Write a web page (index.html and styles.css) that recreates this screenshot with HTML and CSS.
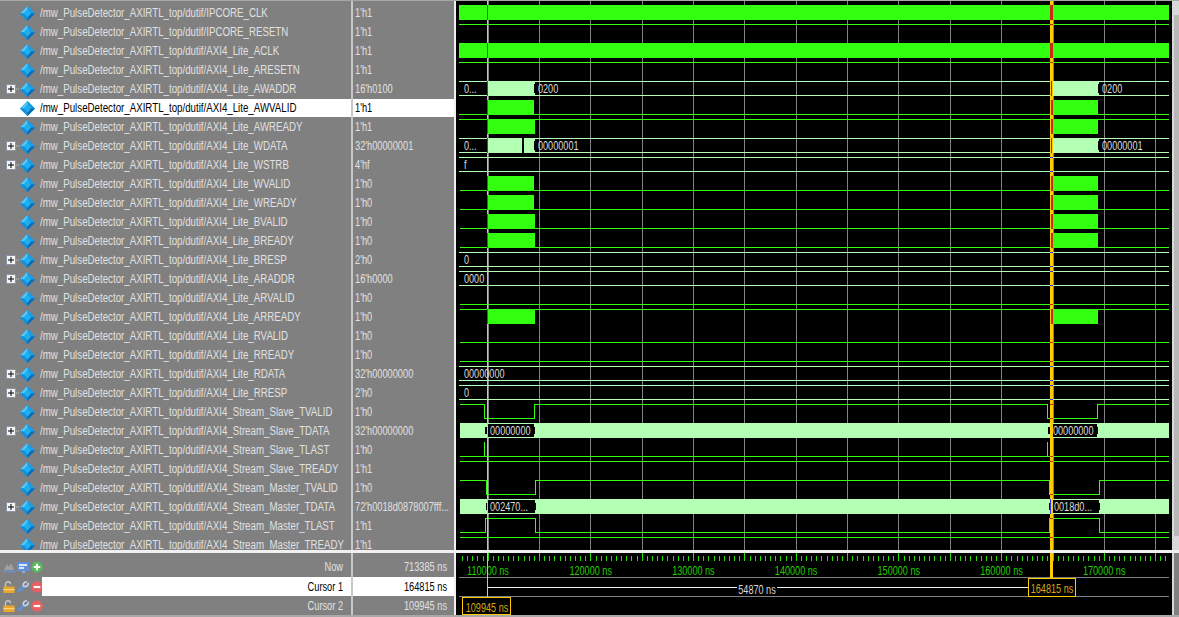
FILE: index.html
```html
<!DOCTYPE html>
<html lang="en">
<head>
<meta charset="utf-8">
<title>Wave</title>
<link rel="stylesheet" href="styles.css">
</head>
<body>
<svg class="defs" aria-hidden="true">
  <symbol id="dia" viewBox="0 0 15 15">
    <polygon points="7.5,0 15,7.5 7.5,15 0,7.5" fill="#1288d8"/>
    <polygon points="7.5,0 15,7.5 11,7.5 7.5,3.5" fill="#1a9ee8"/>
    <polygon points="7.5,0 0,7.5 4,7.5 7.5,3.5" fill="#55c8f8"/>
    <polygon points="0,7.5 7.5,15 7.5,11.5 4,7.5" fill="#1590dc"/>
    <polygon points="15,7.5 7.5,15 7.5,11.5 11,7.5" fill="#0a6cb4"/>
    <polygon points="7.5,3.5 11,7.5 7.5,11.5 4,7.5" fill="#1eb0f0"/>
  </symbol>
  <symbol id="exp" viewBox="0 0 14 10">
    <rect x="0.5" y="0.5" width="9" height="9" fill="#f4f4f4" stroke="#8a94a8"/>
    <path d="M2 5h6M5 2v6" stroke="#000" fill="none"/>
    <path d="M10 5h4" stroke="#d0d0d0" stroke-dasharray="1 1" fill="none"/>
  </symbol>
  <symbol id="lock" viewBox="0 0 12 12">
    <path d="M2.500 6V3.200a2.500 2.500 0 0 1 5 0" fill="none" stroke="#c4c4c4" stroke-width="1.400"/>
    <rect x="0.500" y="5.500" width="11" height="6.500" fill="#e8a830"/>
    <rect x="0.500" y="8" width="11" height="1.200" fill="#f8d878"/>
  </symbol>
  <symbol id="wrench" viewBox="0 0 12 12">
    <path d="M1.500 10.500L7.500 4.500" stroke="#5f90dc" stroke-width="3" fill="none"/>
    <path d="M9.800 0.900a3 3 0 0 0-3.200 4.200M6.600 5.100a3 3 0 0 0 4.500-3.300" stroke="#c4d2ec" stroke-width="1.700" fill="none"/>
  </symbol>
  <symbol id="minus" viewBox="0 0 11 11">
    <circle cx="5.500" cy="5.500" r="5.300" fill="#e86060"/>
    <rect x="2.500" y="4.500" width="6" height="2" fill="#fff"/>
  </symbol>
  <symbol id="plus" viewBox="0 0 11 11">
    <circle cx="5.500" cy="5.500" r="5.300" fill="#58b858"/>
    <path d="M2.500 5.500h6M5.500 2.500v6" stroke="#fff" stroke-width="2" fill="none"/>
  </symbol>
  <symbol id="scene" viewBox="0 0 12 12">
    <path d="M1 9l3-6 2 3 2-4 3 7z" fill="#a0a0a0"/>
    <path d="M0 10.500h12" stroke="#6a90d8" stroke-width="1.500" fill="none"/>
  </symbol>
  <symbol id="screen" viewBox="0 0 12 12">
    <rect x="0" y="1" width="12" height="9" fill="#5f90dc"/>
    <rect x="2" y="3" width="8" height="2" fill="#dfe8fa"/>
    <rect x="2" y="6" width="5" height="2" fill="#dfe8fa"/>
    <rect x="5" y="10" width="3" height="2" fill="#8fa8d8"/>
  </symbol>
</svg>
<main class="app">
  <section class="upper">
    <div class="names">
      <div class="row"><span class="tree"></span><svg class="sig"><use href="#dia"/></svg><span class="nm">/mw_PulseDetector_AXIRTL_top/dutif/IPCORE_CLK</span></div>
      <div class="row"><span class="tree"></span><svg class="sig"><use href="#dia"/></svg><span class="nm">/mw_PulseDetector_AXIRTL_top/dutif/IPCORE_RESETN</span></div>
      <div class="row"><span class="tree"></span><svg class="sig"><use href="#dia"/></svg><span class="nm">/mw_PulseDetector_AXIRTL_top/dutif/AXI4_Lite_ACLK</span></div>
      <div class="row"><span class="tree"></span><svg class="sig"><use href="#dia"/></svg><span class="nm">/mw_PulseDetector_AXIRTL_top/dutif/AXI4_Lite_ARESETN</span></div>
      <div class="row"><span class="tree"><svg class="exp"><use href="#exp"/></svg></span><svg class="sig"><use href="#dia"/></svg><span class="nm">/mw_PulseDetector_AXIRTL_top/dutif/AXI4_Lite_AWADDR</span></div>
      <div class="row sel"><span class="tree"></span><svg class="sig"><use href="#dia"/></svg><span class="nm">/mw_PulseDetector_AXIRTL_top/dutif/AXI4_Lite_AWVALID</span></div>
      <div class="row"><span class="tree"></span><svg class="sig"><use href="#dia"/></svg><span class="nm">/mw_PulseDetector_AXIRTL_top/dutif/AXI4_Lite_AWREADY</span></div>
      <div class="row"><span class="tree"><svg class="exp"><use href="#exp"/></svg></span><svg class="sig"><use href="#dia"/></svg><span class="nm">/mw_PulseDetector_AXIRTL_top/dutif/AXI4_Lite_WDATA</span></div>
      <div class="row"><span class="tree"><svg class="exp"><use href="#exp"/></svg></span><svg class="sig"><use href="#dia"/></svg><span class="nm">/mw_PulseDetector_AXIRTL_top/dutif/AXI4_Lite_WSTRB</span></div>
      <div class="row"><span class="tree"></span><svg class="sig"><use href="#dia"/></svg><span class="nm">/mw_PulseDetector_AXIRTL_top/dutif/AXI4_Lite_WVALID</span></div>
      <div class="row"><span class="tree"></span><svg class="sig"><use href="#dia"/></svg><span class="nm">/mw_PulseDetector_AXIRTL_top/dutif/AXI4_Lite_WREADY</span></div>
      <div class="row"><span class="tree"></span><svg class="sig"><use href="#dia"/></svg><span class="nm">/mw_PulseDetector_AXIRTL_top/dutif/AXI4_Lite_BVALID</span></div>
      <div class="row"><span class="tree"></span><svg class="sig"><use href="#dia"/></svg><span class="nm">/mw_PulseDetector_AXIRTL_top/dutif/AXI4_Lite_BREADY</span></div>
      <div class="row"><span class="tree"><svg class="exp"><use href="#exp"/></svg></span><svg class="sig"><use href="#dia"/></svg><span class="nm">/mw_PulseDetector_AXIRTL_top/dutif/AXI4_Lite_BRESP</span></div>
      <div class="row"><span class="tree"><svg class="exp"><use href="#exp"/></svg></span><svg class="sig"><use href="#dia"/></svg><span class="nm">/mw_PulseDetector_AXIRTL_top/dutif/AXI4_Lite_ARADDR</span></div>
      <div class="row"><span class="tree"></span><svg class="sig"><use href="#dia"/></svg><span class="nm">/mw_PulseDetector_AXIRTL_top/dutif/AXI4_Lite_ARVALID</span></div>
      <div class="row"><span class="tree"></span><svg class="sig"><use href="#dia"/></svg><span class="nm">/mw_PulseDetector_AXIRTL_top/dutif/AXI4_Lite_ARREADY</span></div>
      <div class="row"><span class="tree"></span><svg class="sig"><use href="#dia"/></svg><span class="nm">/mw_PulseDetector_AXIRTL_top/dutif/AXI4_Lite_RVALID</span></div>
      <div class="row"><span class="tree"></span><svg class="sig"><use href="#dia"/></svg><span class="nm">/mw_PulseDetector_AXIRTL_top/dutif/AXI4_Lite_RREADY</span></div>
      <div class="row"><span class="tree"><svg class="exp"><use href="#exp"/></svg></span><svg class="sig"><use href="#dia"/></svg><span class="nm">/mw_PulseDetector_AXIRTL_top/dutif/AXI4_Lite_RDATA</span></div>
      <div class="row"><span class="tree"><svg class="exp"><use href="#exp"/></svg></span><svg class="sig"><use href="#dia"/></svg><span class="nm">/mw_PulseDetector_AXIRTL_top/dutif/AXI4_Lite_RRESP</span></div>
      <div class="row"><span class="tree"></span><svg class="sig"><use href="#dia"/></svg><span class="nm">/mw_PulseDetector_AXIRTL_top/dutif/AXI4_Stream_Slave_TVALID</span></div>
      <div class="row"><span class="tree"><svg class="exp"><use href="#exp"/></svg></span><svg class="sig"><use href="#dia"/></svg><span class="nm">/mw_PulseDetector_AXIRTL_top/dutif/AXI4_Stream_Slave_TDATA</span></div>
      <div class="row"><span class="tree"></span><svg class="sig"><use href="#dia"/></svg><span class="nm">/mw_PulseDetector_AXIRTL_top/dutif/AXI4_Stream_Slave_TLAST</span></div>
      <div class="row"><span class="tree"></span><svg class="sig"><use href="#dia"/></svg><span class="nm">/mw_PulseDetector_AXIRTL_top/dutif/AXI4_Stream_Slave_TREADY</span></div>
      <div class="row"><span class="tree"></span><svg class="sig"><use href="#dia"/></svg><span class="nm">/mw_PulseDetector_AXIRTL_top/dutif/AXI4_Stream_Master_TVALID</span></div>
      <div class="row"><span class="tree"><svg class="exp"><use href="#exp"/></svg></span><svg class="sig"><use href="#dia"/></svg><span class="nm">/mw_PulseDetector_AXIRTL_top/dutif/AXI4_Stream_Master_TDATA</span></div>
      <div class="row"><span class="tree"></span><svg class="sig"><use href="#dia"/></svg><span class="nm">/mw_PulseDetector_AXIRTL_top/dutif/AXI4_Stream_Master_TLAST</span></div>
      <div class="row"><span class="tree"></span><svg class="sig"><use href="#dia"/></svg><span class="nm">/mw_PulseDetector_AXIRTL_top/dutif/AXI4_Stream_Master_TREADY</span></div>
    </div>
    <div class="values">
      <div class="row"><span class="v">1'h1</span></div><div class="row"><span class="v">1'h1</span></div><div class="row"><span class="v">1'h1</span></div><div class="row"><span class="v">1'h1</span></div>
      <div class="row"><span class="v">16'h0100</span></div><div class="row sel"><span class="v">1'h1</span></div><div class="row"><span class="v">1'h1</span></div><div class="row"><span class="v">32'h00000001</span></div>
      <div class="row"><span class="v">4'hf</span></div><div class="row"><span class="v">1'h0</span></div><div class="row"><span class="v">1'h0</span></div><div class="row"><span class="v">1'h0</span></div>
      <div class="row"><span class="v">1'h0</span></div><div class="row"><span class="v">2'h0</span></div><div class="row"><span class="v">16'h0000</span></div><div class="row"><span class="v">1'h0</span></div>
      <div class="row"><span class="v">1'h0</span></div><div class="row"><span class="v">1'h0</span></div><div class="row"><span class="v">1'h0</span></div><div class="row"><span class="v">32'h00000000</span></div>
      <div class="row"><span class="v">2'h0</span></div><div class="row"><span class="v">1'h0</span></div><div class="row"><span class="v">32'h00000000</span></div><div class="row"><span class="v">1'h0</span></div>
      <div class="row"><span class="v">1'h1</span></div><div class="row"><span class="v">1'h0</span></div><div class="row"><span class="v">72'h0018d0878007fff...</span></div><div class="row"><span class="v">1'h1</span></div>
      <div class="row"><span class="v">1'h1</span></div>
    </div>
    <div class="wave">
      <svg class="canvas" viewBox="456 1 716 549" width="716" height="549">
        <path class="grid" d="M488.500 0V550M539.500 0V550M590.500 0V550M642.500 0V550M693.500 0V550M744.500 0V550M796.500 0V550M847.500 0V550M898.500 0V550M950.500 0V550M1001.500 0V550M1053.500 0V550M1104.500 0V550M1155.500 0V550"/>
        <path class="soft" d="M459 81.500H1169M459 95.500H1169M459 138.500H1169M459 152.500H1169M459 157.500H1169M459 171.500H1169M459 252.500H1169M459 266.500H1169M459 271.500H1169M459 285.500H1169M459 366.500H1169M459 380.500H1169M459 385.500H1169M459 399.500H1169"/>
        <path class="line" d="M459 24.500H1169M459 62.500H1169M459 114.500H1169M459 119.500H1169M460 190.500H1169M460 209.500H1169M460 228.500H1169M460 247.500H1169M460 304.500H1169M460 309.500H1169M460 342.500H1169M460 361.500H1169M460 456.500H1169M460 461.500H1169M460 537.500H1169"/>
        <path class="line" d="M460 404.500H484.500V418.500H534.500V404.500H1047.500V418.500H1097.500V404.500H1169"/>
        <path class="line" d="M460 480.500H486.500V494.500H535.500V480.500H1049.500V494.500H1099.500V480.500H1169"/>
        <path class="line" d="M460 532.500H485.500V518.500H535.500V532.500H1049.500V518.500H1099.500V532.500H1169"/>
        <path class="line" d="M484.500 442V456M1047.500 442V456"/>
        <g class="bars">
          <rect x="459" y="5" width="710" height="15"/>
          <rect x="459" y="43" width="710" height="15"/>
          <rect x="488" y="100" width="46" height="15"/><rect x="1053" y="100" width="45" height="15"/>
          <rect x="488" y="119" width="47" height="15"/><rect x="1053" y="119" width="45" height="15"/>
          <rect x="488" y="176" width="46" height="15"/><rect x="1053" y="176" width="45" height="15"/>
          <rect x="488" y="195" width="46" height="15"/><rect x="1053" y="195" width="45" height="15"/>
          <rect x="488" y="214" width="47" height="15"/><rect x="1053" y="214" width="45" height="15"/>
          <rect x="488" y="233" width="47" height="15"/><rect x="1053" y="233" width="45" height="15"/>
          <rect x="488" y="309" width="47" height="15"/><rect x="1053" y="309" width="45" height="15"/>
        </g>
        <g class="bus">
          <rect x="488" y="81" width="47" height="15"/><rect x="1053" y="81" width="46" height="15"/>
          <rect x="488" y="138" width="34" height="15"/><rect x="524" y="138" width="11" height="15"/><rect x="1053" y="138" width="46" height="15"/>
          <rect x="460" y="423" width="709" height="15"/>
          <rect x="460" y="499" width="709" height="15"/>
        </g>
        <g class="notch">
          <rect x="534" y="84" width="1" height="9"/><rect x="1098" y="84" width="1" height="9"/>
          <rect x="534" y="141" width="1" height="9"/><rect x="1098" y="141" width="1" height="9"/>
          <rect x="522" y="138" width="2" height="15"/>
          <rect x="487" y="424" width="47" height="13"/><rect x="485" y="427" width="2" height="7"/><rect x="534" y="427" width="1" height="7"/>
          <rect x="1050" y="424" width="47" height="13"/><rect x="1048" y="427" width="2" height="7"/><rect x="1097" y="427" width="1" height="7"/>
          <rect x="488" y="500" width="47" height="13"/><rect x="486" y="503" width="2" height="7"/><rect x="535" y="503" width="1" height="7"/>
          <rect x="1051" y="500" width="48" height="13"/><rect x="1049" y="503" width="2" height="7"/><rect x="1099" y="503" width="1" height="7"/>
        </g>
        <g class="sigval">
          <text x="464" y="93">0...</text><text x="538" y="93">0200</text><text x="1102" y="93">0200</text>
          <text x="464" y="150">0...</text><text x="538" y="150">00000001</text><text x="1102" y="150">00000001</text>
          <text x="464" y="169">f</text>
          <text x="464" y="264">0</text>
          <text x="464" y="283">0000</text>
          <text x="464" y="378">00000000</text>
          <text x="464" y="397">0</text>
          <text x="490" y="435">00000000</text><text x="1053" y="435">00000000</text>
          <text x="490" y="511">002470...</text><text x="1054" y="511">0018d0...</text>
        </g>
        <rect class="c2" x="487" y="0" width="1" height="550"/>
        <rect class="c1" x="1050" y="0" width="3" height="550"/>
        <g class="hit">
          <rect x="487" y="5" width="1" height="15"/><rect x="487" y="43" width="1" height="15"/>
          <rect x="487" y="100" width="1" height="15"/><rect x="487" y="119" width="1" height="15"/>
          <rect x="487" y="176" width="1" height="15"/><rect x="487" y="195" width="1" height="15"/>
          <rect x="487" y="214" width="1" height="15"/><rect x="487" y="233" width="1" height="15"/>
          <rect x="487" y="309" width="1" height="15"/>
          <rect x="1050" y="5" width="3" height="15"/><rect x="1050" y="43" width="3" height="15"/>
          <rect x="1051" y="100" width="2" height="15"/><rect x="1051" y="119" width="2" height="15"/>
          <rect x="1051" y="176" width="2" height="15"/><rect x="1051" y="195" width="2" height="15"/>
          <rect x="1051" y="214" width="2" height="15"/><rect x="1051" y="233" width="2" height="15"/>
          <rect x="1051" y="309" width="2" height="15"/>
          <rect x="1050" y="24" width="3" height="1"/><rect x="1050" y="62" width="3" height="1"/>
          <rect x="1050" y="304" width="3" height="1"/><rect x="1050" y="342" width="3" height="1"/>
          <rect x="1050" y="361" width="3" height="1"/><rect x="1050" y="404" width="3" height="1"/>
          <rect x="1050" y="418" width="3" height="1"/><rect x="1050" y="456" width="3" height="1"/>
          <rect x="1050" y="461" width="3" height="1"/><rect x="1050" y="494" width="3" height="1"/>
          <rect x="1050" y="518" width="3" height="1"/><rect x="1050" y="537" width="3" height="1"/>
        </g>
        <g class="blue">
          <rect x="1051" y="81" width="1" height="15"/><rect x="1051" y="138" width="1" height="15"/>
          <rect x="1050" y="499" width="1" height="15"/><rect x="487" y="81" width="1" height="15"/>
          <rect x="487" y="138" width="1" height="15"/>
          <rect x="1050" y="157" width="3" height="1"/><rect x="1050" y="171" width="3" height="1"/>
          <rect x="1050" y="252" width="3" height="1"/><rect x="1050" y="266" width="3" height="1"/>
          <rect x="1050" y="271" width="3" height="1"/><rect x="1050" y="285" width="3" height="1"/>
          <rect x="1050" y="366" width="3" height="1"/><rect x="1050" y="380" width="3" height="1"/>
          <rect x="1050" y="385" width="3" height="1"/><rect x="1050" y="399" width="3" height="1"/>
        </g>
      </svg>
    </div>
    <div class="scroll"><span class="sb-btn"></span><span class="sb-track"></span><span class="sb-btn"></span></div>
  </section>
  <div class="rule"></div>
  <section class="lower">
    <div class="names">
      <div class="brow first">
        <span class="tools"><svg class="ti"><use href="#scene"/></svg><svg class="ti"><use href="#screen"/></svg><svg class="ti"><use href="#plus"/></svg></span>
        <span class="lbl"><span class="r">Now</span></span>
      </div>
      <div class="brow">
        <span class="tools"><svg class="ti"><use href="#lock"/></svg><svg class="ti"><use href="#wrench"/></svg><svg class="ti"><use href="#minus"/></svg></span>
        <span class="lbl on"><span class="r">Cursor 1</span></span>
      </div>
      <div class="brow">
        <span class="tools"><svg class="ti"><use href="#lock"/></svg><svg class="ti"><use href="#wrench"/></svg><svg class="ti"><use href="#minus"/></svg></span>
        <span class="lbl"><span class="r">Cursor 2</span></span>
      </div>
    </div>
    <div class="values">
      <div class="brow first tm"><span class="r">713385 ns</span></div>
      <div class="brow tm on"><span class="r">164815 ns</span></div>
      <div class="brow tm"><span class="r">109945 ns</span></div>
    </div>
    <div class="wave">
      <svg class="canvas" viewBox="456 553 716 62" width="716" height="62">
        <path class="minor" d="M462 558.500H1169"/>
        <path class="major" d="M488.500 553V561M539.500 553V561M590.500 553V561M642.500 553V561M693.500 553V561M744.500 553V561M796.500 553V561M847.500 553V561M898.500 553V561M950.500 553V561M1001.500 553V561M1053.500 553V561M1104.500 553V561M1155.500 553V561"/>
        <g class="ticks">
          <text x="488" y="575">110000 ns</text><text x="590.700" y="575">120000 ns</text><text x="693.400" y="575">130000 ns</text><text x="796.100" y="575">140000 ns</text><text x="898.800" y="575">150000 ns</text><text x="1001.500" y="575">160000 ns</text><text x="1104.200" y="575">170000 ns</text>
        </g>
        <path class="sep" d="M459 577.500H1169M459 596.500H1169"/>
        <path class="span" d="M488 587.500H737M777 587.500H1029"/>
        <text class="delta" x="757" y="594">54870 ns</text>
        <rect class="c2" x="487" y="553" width="1" height="44"/>
        <rect class="c1" x="1050" y="553" width="3" height="25"/>
        <rect class="box" x="1028.500" y="578.500" width="47" height="18"/>
        <text class="ctext" x="1052" y="593">164815 ns</text>
        <rect class="box" x="462.500" y="597.500" width="48" height="17"/>
        <text class="ctext" x="487" y="612">109945 ns</text>
      </svg>
    </div>
    <div class="scroll lowbar"></div>
  </section>
  <div class="foot"></div>
</main>
</body>
</html>
```
FILE: styles.css
```css
* { box-sizing: border-box; }
html, body { margin: 0; padding: 0; }
body {
  width: 1179px;
  height: 617px;
  overflow: hidden;
  background: #808080;
  font-family: "Liberation Sans", Arial, sans-serif;
  font-size: 12px;
  color: #e0e0e0;
}
.defs { position: absolute; width: 0; height: 0; }
.app { display: flex; flex-direction: column; height: 617px; border-top: 1px solid #a8a8a8; }

.upper { display: flex; height: 549px; overflow: hidden; }
.rule { height: 3px; background: #f0f0f0; }
.lower { display: flex; height: 62px; }
.foot { height: 2px; background: #a8a8a8; }

.names { width: 353px; border-right: 2px solid #c8c8c8; overflow: hidden; flex: none; }
.values { width: 103px; border-right: 2px solid #f0f0f0; overflow: hidden; flex: none; }
.upper .names, .upper .values { padding-top: 2px; }
.lower .names, .lower .values { padding-top: 5px; }

.row {
  display: flex;
  align-items: center;
  height: 19px;
  border-top: 1px solid #808080;
  white-space: nowrap;
}
.values .row { padding-left: 2px; }
.row.sel { background: #fff; color: #000; }
.tree { display: flex; align-items: center; width: 20px; height: 100%; padding-left: 6px; flex: none; }
.exp { width: 14px; height: 10px; }
.sig { width: 15px; height: 15px; flex: none; margin-right: 5px; }
.nm { flex: none; width: 310px; transform: scaleX(.81); transform-origin: left center; }
.v { flex: none; width: 128px; transform: scaleX(.77); transform-origin: left center; }
.r { flex: none; white-space: nowrap; transform: scaleX(.77); transform-origin: right center; }

.brow { display: flex; align-items: center; height: 19px; }
.brow.first { padding-bottom: 2px; }
.tools { display: flex; align-items: center; gap: 2px; width: 42px; height: 100%; padding-left: 3px; flex: none; }
.ti { width: 12px; height: 12px; flex: none; }
.lbl { flex: 1; display: flex; align-items: center; justify-content: flex-end; height: 100%; padding-right: 8px; color: #e0e0e0; }
.lbl.on { background: #fff; color: #000; }
.tm { justify-content: flex-end; padding-right: 7px; }
.tm.on { background: #fff; color: #000; }

.wave { width: 716px; background: #000; flex: none; }
.canvas { display: block; shape-rendering: crispEdges; }
.canvas text { transform-box: fill-box; transform: scaleX(.76); font-size: 12px; }
.grid { stroke: #808080; fill: none; }
.soft { stroke: #b3ffb3; fill: none; }
.line { stroke: #33ff11; fill: none; }
.bars { fill: #33ff11; }
.bus { fill: #b3ffb3; }
.notch { fill: #000; }
.sigval text { fill: #dcdcdc; transform-origin: left center; }
.c1, .c2 { fill: #ffcc00; }
.hit { fill: #cc2a10; }
.blue { fill: #3a3ae0; }
.minor { stroke: #22dd00; stroke-width: 5; stroke-dasharray: 1 4.135; fill: none; }
.major { stroke: #22dd00; fill: none; }
.ticks text { fill: #22cc00; text-anchor: middle; transform-origin: center; }
.sep { stroke: #808080; fill: none; }
.span { stroke: #f0f0f0; fill: none; }
.delta { fill: #d8d8d8; text-anchor: middle; transform-origin: center; }
.box { fill: #000; stroke: #ffcc00; }
.canvas .ctext { fill: #d4a810; text-anchor: middle; transform-origin: center; }

.scroll { display: flex; flex-direction: column; width: 7px; flex: none; border-left: 2px solid #d8d8d8; background: #b8b8b8; }
.lowbar { background: #808080; }
.sb-btn { height: 14px; background: #d8d8d8; flex: none; }
.sb-track { flex: 1; background: #b8b8b8; }
```
